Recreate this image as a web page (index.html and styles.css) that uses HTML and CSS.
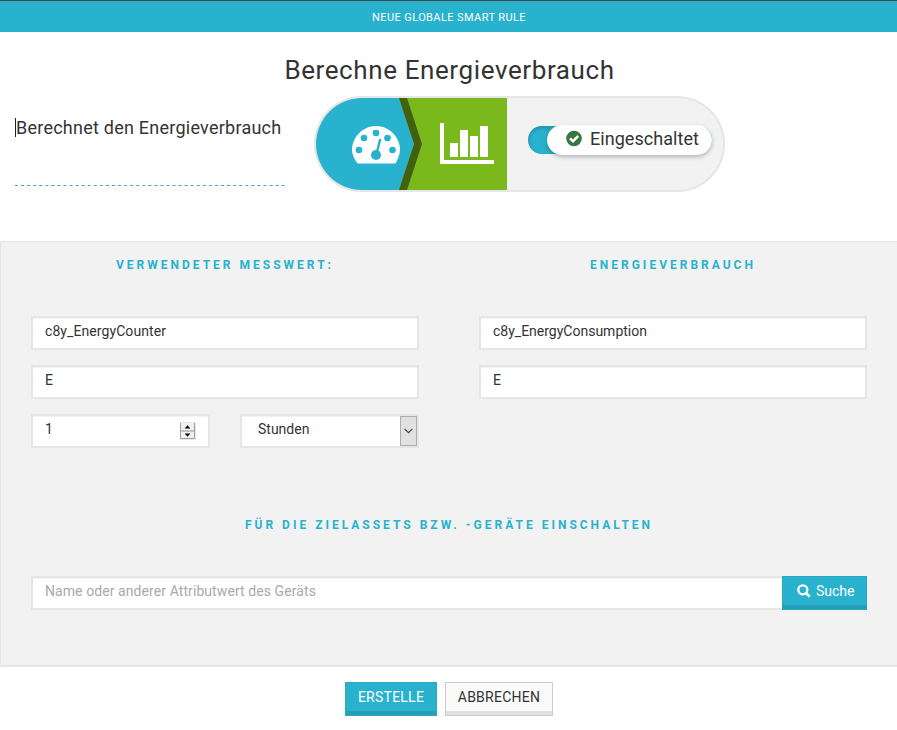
FILE: index.html
```html
<!DOCTYPE html>
<html lang="de">
<head>
<meta charset="utf-8">
<title>Neue globale Smart Rule</title>
<link rel="stylesheet" href="styles.css">
</head>
<body>
<header class="topbar"><span class="topbar-text">NEUE GLOBALE SMART RULE</span></header>
<section class="intro">
  <h1 class="title"><span class="title-text">Berechne Energieverbrauch</span></h1>
  <div class="intro-row">
    <div class="description">
      <span class="description-text">Berechnet den Energieverbrauch</span>
      <svg class="dashes" width="270" height="1"><path d="M0 .5H270" stroke="#28b2ce" stroke-dasharray="3 3.060"/></svg>
    </div>
    <div class="pill">
      <svg class="flow" width="191" height="92" viewBox="-1 0 191 92">
        <rect x="-1" width="191" height="92" fill="#28b2ce"/>
        <path d="M82 0H190V92H82L97 46Z" fill="#7ab91b"/>
        <path d="M82 0H90L105 46L90 92H82L97 46Z" fill="#42610f"/>
        <path d="M40.500 65.500C37 61 35 56 35 52C35 39 46 28 59 28S83 39 83 52C83 56 81 61 78.500 65.500Z" fill="#fff"/>
        <g fill="#28b2ce"><circle cx="59" cy="35" r="3.300"/><circle cx="47" cy="40" r="3.300"/><circle cx="70.500" cy="40" r="3.300"/><circle cx="42" cy="52" r="3.300"/><circle cx="75.500" cy="52" r="3.300"/><circle cx="59" cy="57" r="5"/></g>
        <path d="M59.500 56L63 42" stroke="#28b2ce" stroke-width="2.500" stroke-linecap="round"/>
        <path d="M123 25H127V62H177V66H123ZM133 45H141V59H133ZM143 32H151V59H143ZM153 38H161V59H153ZM163 28H171V59H163Z" fill="#fff"/>
      </svg>
      <div class="toggle">
        <div class="knob">
          <svg width="16" height="16" viewBox="0 0 16 16"><circle cx="8" cy="7.500" r="7.800" fill="#38773d"/><path d="M4 7.300L7 10.200L12.200 5" fill="none" stroke="#fff" stroke-width="2.500"/></svg>
          <span class="knob-text">Eingeschaltet</span>
        </div>
      </div>
    </div>
  </div>
</section>
<main class="panel">
  <div class="columns">
    <div class="column">
      <h2 class="heading"><span class="h-a">VERWENDETER MESSWERT:</span></h2>
      <div class="field"><span class="t-counter">c8y_EnergyCounter</span></div>
      <div class="field">E</div>
      <div class="pair">
        <div class="field number"><span>1</span>
          <svg class="spinner" width="16" height="18" viewBox="0 0 16 18"><path d="M0 0H16V18H0Z" fill="#e6e6e6"/><path d="M1 1H15V8H1ZM1 10H15V16H1Z" fill="#f0f0f0"/><path d="M.5 1V16.500H14.500V1M0 9H15" fill="none" stroke="#a0a0a0"/><path d="M7 3.500H8V4.500H9V5.500H10V6.500H5V5.500H6V4.500H7ZM5 11.500H10V12.500H9V13.500H8V14.500H7V13.500H6V12.500H5Z" fill="#000"/></svg>
        </div>
        <div class="field select"><span class="t-hours">Stunden</span>
          <span class="select-btn"><svg width="9" height="6" viewBox="0 0 9 6"><path d="M.6 .8L4.500 4.700L8.400 .8" fill="none" stroke="#444" stroke-width="1.200"/></svg></span>
        </div>
      </div>
    </div>
    <div class="column">
      <h2 class="heading"><span class="h-b">ENERGIEVERBRAUCH</span></h2>
      <div class="field"><span class="t-consumption">c8y_EnergyConsumption</span></div>
      <div class="field">E</div>
    </div>
  </div>
  <h2 class="heading target"><span class="h-c">FÜR DIE ZIELASSETS BZW. -GERÄTE EINSCHALTEN</span></h2>
  <div class="search">
    <div class="field search-field"><span class="t-place">Name oder anderer Attributwert des Geräts</span></div>
    <button class="search-btn"><svg width="14" height="14" viewBox="0 0 14 14"><circle cx="5.800" cy="5.800" r="4.500" fill="none" stroke="#fff" stroke-width="2.300"/><path d="M9 9L12.600 12.600" stroke="#fff" stroke-width="2.600"/></svg><span class="t-search">Suche</span></button>
  </div>
</main>
<footer class="footer">
  <button class="btn primary"><span class="t-create">ERSTELLE</span></button>
  <button class="btn cancel"><span class="t-cancel">ABBRECHEN</span></button>
</footer>
</body>
</html>
```
FILE: styles.css
```css
* { box-sizing: border-box; }
body { margin: 0; background: #fff; color: #333; font: 14px/20px Roboto, "Liberation Sans", sans-serif; width: 897px; height: 730px; overflow: hidden; }
h1, h2 { margin: 0; }
svg { display: block; flex: none; }
span { white-space: nowrap; }
.topbar { height: 32px; border-top: 1px solid #48494b; background: #28b2ce; color: #fff; text-align: center; font-size: 11px; line-height: 33px; padding-left: 1px; }
.topbar-text { letter-spacing: .4px; }
.intro { height: 209px; padding-top: 20px; }
.title { height: 36px; text-align: center; font-size: 26px; line-height: 36px; font-weight: 400; padding-left: 2px; }
.title-text { letter-spacing: .6px; }
.intro-row { display: flex; margin-top: 8px; padding-left: 15px; }
.description { width: 270px; height: 90px; flex: none; margin-right: 29px; padding-top: 22px; display: flex; flex-direction: column; justify-content: space-between; font-size: 18px; }
.description-text { border-left: 1px solid #222; line-height: 19px; height: 19px; letter-spacing: .24px; }
.pill { width: 411px; height: 96px; border: 2px solid #e6e6e6; border-radius: 48px; background: #f2f2f2; overflow: hidden; display: flex; flex: none; }
.toggle { width: 184px; height: 28px; margin: 28px 0 0 21px; border-radius: 14px; background: #28b2ce; box-shadow: inset 0 2px 4px rgba(0,0,0,.2); display: flex; justify-content: flex-end; }
.knob { width: 165px; height: 30px; margin-top: -1px; padding-left: 19px; border-radius: 15px; background: #fff; box-shadow: 0 2px 4px rgba(0,0,0,.25); display: flex; align-items: center; gap: 8px; font-size: 18px; flex: none; }
.knob svg { margin-top: -2px; overflow: visible; }
.knob-text { letter-spacing: .05px; position: relative; top: -1px; }
.panel { height: 426px; border: 1px solid #e6e6e6; border-width: 1px 0 2px 1px; background: #f2f2f2; padding: 13px 30px 0; }
.columns { display: flex; gap: 60px; height: 260px; }
.column { width: 388px; display: flex; flex-direction: column; gap: 15px; }
.heading { height: 20px; line-height: 20px; font-size: 12px; font-weight: 700; color: #28b2ce; text-align: center; letter-spacing: 3px; }
.column .heading { margin-bottom: 26px; }
.field { height: 34px; border: 2px solid #e6e6e6; background: #fff; box-shadow: inset 0 1px 1px rgba(0,0,0,.06); padding: 0 12px; line-height: 27px; display: flex; }
.t-counter { letter-spacing: .08px; }
.t-place { letter-spacing: .08px; }
.pair { display: flex; gap: 30px; }
.number { width: 179px; justify-content: space-between; }
.spinner { margin-top: 6px; }
.select { width: 179px; padding: 0 0 0 16px; justify-content: space-between; }
.select-btn { width: 17px; height: 30px; border: 1px solid #adadad; background: #e1e1e1; display: flex; align-items: center; justify-content: center; }
.target { margin-bottom: 41px; }
.search { display: flex; width: 836px; }
.search-field { flex: 1; border-right: 0; color: #a9a9a9; }
.search-btn { width: 85px; height: 34px; border: 1px solid #28a5c0; background: #28b2ce; box-shadow: inset 0 -4px #239fb9; color: #fff; font: inherit; padding: 0 0 4px 14px; display: flex; align-items: center; gap: 5px; }
.footer { display: flex; justify-content: center; gap: 8px; padding-top: 15px; padding-left: 1px; }
.btn { height: 34px; font: inherit; padding: 0 0 4px; border: 1px solid #28a9c4; letter-spacing: .25px; }
.primary { width: 92px; background: #28b2ce; color: #fff; box-shadow: inset 0 -4px #239fb9; }
.cancel { width: 108px; background: #fafafa; color: #333; border-color: #ccc; box-shadow: inset 0 -4px #e0e0e0; }
```
